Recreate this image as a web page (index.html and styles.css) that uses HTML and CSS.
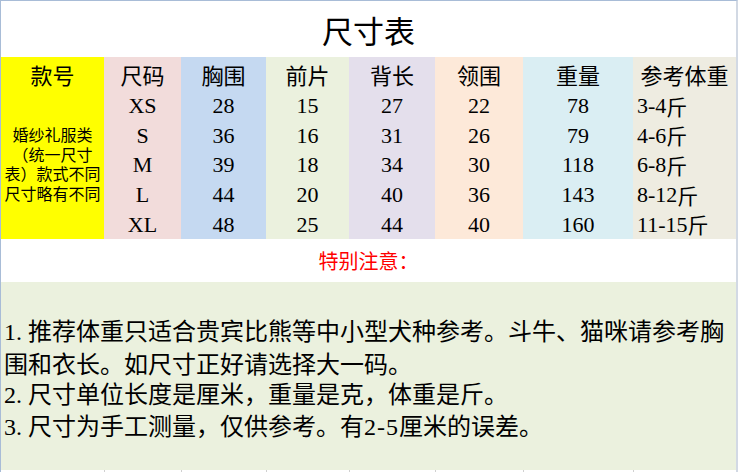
FILE: index.html
```html
<!DOCTYPE html>
<html lang="zh-CN">
<head>
<meta charset="utf-8">
<title>尺寸表</title>
<link rel="stylesheet" href="styles.css">
</head>
<body>
<div class="sheet">
  <div class="title">尺寸表</div>
  <div class="table">
    <div class="col c-style">
      <div class="h">款号</div>
      <div class="desc">
        <span class="dl">婚纱礼服类</span>
        <span class="dl">（统一尺寸</span>
        <span class="dl">表）款式不同</span>
        <span class="dl">尺寸略有不同</span>
      </div>
    </div>
    <div class="col c-size">
      <div class="h">尺码</div>
      <div class="v">XS</div><div class="v">S</div><div class="v">M</div><div class="v">L</div><div class="v">XL</div>
    </div>
    <div class="col c-chest">
      <div class="h">胸围</div>
      <div class="v">28</div><div class="v">36</div><div class="v">39</div><div class="v">44</div><div class="v">48</div>
    </div>
    <div class="col c-front">
      <div class="h">前片</div>
      <div class="v">15</div><div class="v">16</div><div class="v">18</div><div class="v">20</div><div class="v">25</div>
    </div>
    <div class="col c-back">
      <div class="h">背长</div>
      <div class="v">27</div><div class="v">31</div><div class="v">34</div><div class="v">40</div><div class="v">44</div>
    </div>
    <div class="col c-neck">
      <div class="h">领围</div>
      <div class="v">22</div><div class="v">26</div><div class="v">30</div><div class="v">36</div><div class="v">40</div>
    </div>
    <div class="col c-weight">
      <div class="h">重量</div>
      <div class="v">78</div><div class="v">79</div><div class="v">118</div><div class="v">143</div><div class="v">160</div>
    </div>
    <div class="col c-ref">
      <div class="h">参考体重</div>
      <div class="v left">3-4<span class="cjk">斤</span></div>
      <div class="v left">4-6<span class="cjk">斤</span></div>
      <div class="v left">6-8<span class="cjk">斤</span></div>
      <div class="v left">8-12<span class="cjk">斤</span></div>
      <div class="v left">11-15<span class="cjk">斤</span></div>
    </div>
  </div>
  <div class="notice">特别注意：</div>
  <div class="notes">
    <p><span class="n">1.</span>推荐体重只适合贵宾比熊等中小型犬种参考。斗牛、猫咪请参考胸<br>围和衣长。如尺寸正好请选择大一码。</p>
    <p><span class="n">2.</span>尺寸单位长度是厘米，重量是克，体重是斤。</p>
    <p><span class="n">3.</span>尺寸为手工测量，仅供参考。有<span class="n3">2-5</span>厘米的误差。</p>
  </div>
  <div class="foot">
    <span class="t w1"></span><span class="t w2"></span><span class="t w3"></span><span class="t w4"></span><span class="t w5"></span><span class="t w6"></span><span class="t w7"></span><span class="t w8"></span>
  </div>
</div>
</body>
</html>
```

FILE: styles.css
```css
html, body {
  margin: 0;
  padding: 0;
  background: #ffffff;
}

body {
  width: 738px;
  height: 472px;
  overflow: hidden;
  font-family: "Noto Sans CJK SC", "Noto Sans", sans-serif;
  color: #000;
}

.sheet {
  width: 738px;
  height: 472px;
  box-sizing: border-box;
  border-top: 1px solid #a8bcd7;
  border-left: 1px solid #a8bcd7;
  border-right: 2px solid #d2d9e4;
  display: flex;
  flex-direction: column;
  background: #fff;
}

.title {
  height: 56px;
  flex: none;
  display: flex;
  align-items: center;
  justify-content: center;
  font-size: 31px;
  line-height: 1;
}

.table {
  height: 182px;
  flex: none;
  display: flex;
}

.col {
  display: flex;
  flex-direction: column;
}

.c-style { width: 103px; background: #ffff00; }
.c-size { width: 77px; background: #f2dcdb; }
.c-chest { width: 85px; background: #c5d9f1; }
.c-front { width: 83px; background: #ebf1de; }
.c-back { width: 86px; background: #e4dfec; }
.c-neck { width: 88px; background: #fde9d9; }
.c-weight { width: 110px; background: #daeef3; }
.c-ref { width: 103px; background: #eeece1; }

.h {
  height: 34px;
  flex: none;
  display: flex;
  align-items: center;
  justify-content: center;
  font-size: 22px;
  line-height: 1;
  white-space: nowrap;
}

.v {
  height: 29.6px;
  flex: none;
  box-sizing: border-box;
  padding-top: 1px;
  display: flex;
  align-items: center;
  justify-content: center;
  font-family: "Liberation Serif", "Noto Sans CJK SC", serif;
  font-size: 22px;
  line-height: 1;
  white-space: nowrap;
}

.v.left {
  justify-content: flex-start;
  padding-left: 4px;
}

.cjk {
  font-family: "Noto Sans CJK SC", sans-serif;
  font-size: 21px;
}

.desc {
  flex: 1;
  display: flex;
  flex-direction: column;
  align-items: center;
  justify-content: center;
  text-align: center;
  font-size: 16px;
  padding-bottom: 2px;
  box-sizing: border-box;
}

.dl {
  display: block;
  height: 19.5px;
  line-height: 19.5px;
  white-space: nowrap;
}

.notice {
  height: 43px;
  flex: none;
  display: flex;
  align-items: center;
  justify-content: center;
  color: #ff0000;
  font-size: 20px;
  line-height: 1;
}

.notes {
  height: 188px;
  flex: none;
  box-sizing: border-box;
  background: #ebf1de;
  display: flex;
  flex-direction: column;
  justify-content: center;
  padding-left: 3px;
  padding-top: 6px;
  font-size: 24px;
  line-height: 29.7px;
  white-space: nowrap;
}

.notes p {
  margin: 0;
}

.n {
  display: inline-block;
  width: 1em;
  font-family: "Liberation Serif", serif;
}

.n3 {
  font-family: "Liberation Serif", serif;
  letter-spacing: 1px;
}

.foot {
  height: 2px;
  flex: none;
  display: flex;
}

.t {
  display: block;
  height: 2px;
  box-sizing: border-box;
  border-left: 1px solid #d0d0d0;
}

.w1 { width: 103px; border-left: none; }
.w2 { width: 77px; }
.w3 { width: 85px; }
.w4 { width: 83px; }
.w5 { width: 86px; }
.w6 { width: 88px; }
.w7 { width: 110px; }
.w8 { width: 103px; }
```
